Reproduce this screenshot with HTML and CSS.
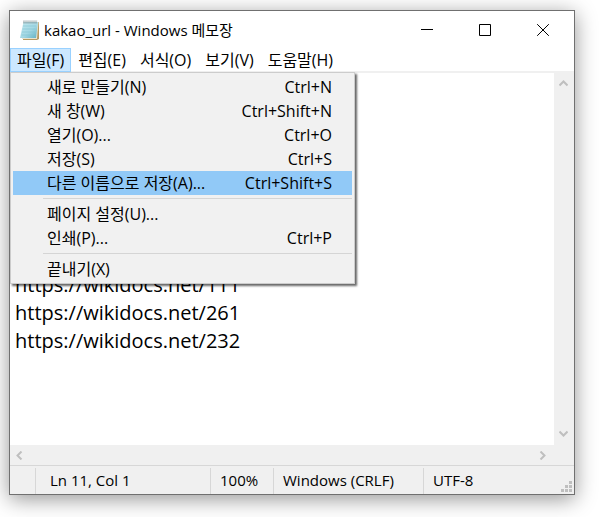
FILE: index.html
```html
<!DOCTYPE html>
<html lang="ko">
<head>
<meta charset="utf-8">
<meta name="viewport" content="width=device-width, initial-scale=1">
<title>kakao_url - Windows 메모장</title>
<link rel="stylesheet" href="styles.css">
</head>
<body>
<main class="window">
  <header class="titlebar">
    <svg class="app-icon" width="20" height="20" viewBox="0 0 20 20" aria-hidden="true">
      <defs>
        <linearGradient id="page" x1="0" y1="0" x2="1" y2="1">
          <stop offset="0" stop-color="#c3e9ef"/>
          <stop offset=".55" stop-color="#a4d8e4"/>
          <stop offset="1" stop-color="#5fafc2"/>
        </linearGradient>
      </defs>
      <path d="M4 2h15v17l-2 1H3z" fill="#b79a62"/>
      <path d="M4 2h14.500L17 19H2z" fill="#e7e3cf"/>
      <path d="M3.500 2H18l-2 16H0z" fill="url(#page)"/>
      <path d="M3 6h13M2.500 9h13M2 12h13M1.500 15h13" stroke="#82c3d1" stroke-width=".6"/>
      <path d="M4 .5v3M6 .5v3M8 .5v3M10 .5v3M12 .5v3M14 .5v3M16 .5v3" stroke="#7d8d90" stroke-width="1"/>
      <path d="M3.500 1h14" stroke="#dce3e4" stroke-width=".8"/>
    </svg>
    <h1 class="title">kakao_url - Windows 메모장</h1>
    <div class="controls">
      <button class="control" type="button" aria-label="최소화"><svg width="12" height="12" viewBox="0 0 12 12"><path d="M0 5.500h12"/></svg></button>
      <button class="control" type="button" aria-label="최대화"><svg width="12" height="12" viewBox="0 0 12 12"><path d="M.5 .5h11v11H.5z"/></svg></button>
      <button class="control" type="button" aria-label="닫기"><svg width="12" height="12" viewBox="0 0 12 12"><path d="M.2 .2l11.600 11.600M11.800 .2L.2 11.800"/></svg></button>
    </div>
  </header>

  <nav class="menubar">
    <div class="menu-host">
      <button class="menu-title open" type="button" aria-expanded="true">파일(F)</button>
      <div class="menu" role="menu">
        <button class="item" type="button" role="menuitem"><span>새로 만들기(N)</span><span>Ctrl+N</span></button>
        <button class="item" type="button" role="menuitem"><span>새 창(W)</span><span>Ctrl+Shift+N</span></button>
        <button class="item" type="button" role="menuitem"><span>열기(O)...</span><span>Ctrl+O</span></button>
        <button class="item" type="button" role="menuitem"><span>저장(S)</span><span>Ctrl+S</span></button>
        <button class="item selected" type="button" role="menuitem"><span>다른 이름으로 저장(A)...</span><span>Ctrl+Shift+S</span></button>
        <hr class="separator">
        <button class="item" type="button" role="menuitem"><span>페이지 설정(U)...</span></button>
        <button class="item" type="button" role="menuitem"><span>인쇄(P)...</span><span>Ctrl+P</span></button>
        <hr class="separator">
        <button class="item" type="button" role="menuitem"><span>끝내기(X)</span></button>
      </div>
    </div>
    <button class="menu-title" type="button">편집(E)</button>
    <button class="menu-title" type="button">서식(O)</button>
    <button class="menu-title" type="button">보기(V)</button>
    <button class="menu-title" type="button">도움말(H)</button>
  </nav>

  <section class="workspace">
    <textarea class="editor" aria-label="텍스트 편집기" spellcheck="false" wrap="off">







https://wikidocs.net/111
https://wikidocs.net/261
https://wikidocs.net/232
</textarea>
    <div class="scroll vertical">
      <button class="arrow" type="button" aria-label="위로"><svg width="9" height="7" viewBox="0 0 9 7"><path d="M.5 5.500l4-4 4 4"/></svg></button>
      <button class="arrow" type="button" aria-label="아래로"><svg width="9" height="7" viewBox="0 0 9 7"><path d="M.5 1.500l4 4 4-4"/></svg></button>
    </div>
    <div class="scroll horizontal">
      <button class="arrow" type="button" aria-label="왼쪽으로"><svg width="7" height="9" viewBox="0 0 7 9"><path d="M5.500 .5l-4 4 4 4"/></svg></button>
      <button class="arrow" type="button" aria-label="오른쪽으로"><svg width="7" height="9" viewBox="0 0 7 9"><path d="M1.500 .5l4 4-4 4"/></svg></button>
    </div>
  </section>

  <footer class="statusbar">
    <span class="cell"></span>
    <span class="cell">Ln 11, Col 1</span>
    <span class="cell">100%</span>
    <span class="cell">Windows (CRLF)</span>
    <span class="cell">UTF-8</span>
    <svg class="grip" width="11" height="11" viewBox="0 0 11 11" aria-hidden="true"><path d="M8 0h3v3H8zM4 4h3v3H4zM8 4h3v3H8zM0 8h3v3H0zM4 8h3v3H4zM8 8h3v3H8z"/></svg>
  </footer>
</main>
</body>
</html>
```
FILE: styles.css
```css
* {
  box-sizing: border-box;
}

body {
  display: flex;
  min-height: 100vh;
  margin: 0;
  padding: 10px 27px 22px 9px;
  background: #fff;
  color: #000;
  font: 15px/24px "Open Sans", "Noto Sans CJK KR", sans-serif;
}

button {
  margin: 0;
  padding: 0;
  border: 0;
  background: none;
  color: inherit;
  font: inherit;
}

.window {
  display: flex;
  flex: 1;
  flex-direction: column;
  min-width: 0;
  border: 1px solid #707070;
  background: #fff;
  box-shadow: 0 4px 20px rgba(0, 0, 0, 0.42);
}

.titlebar {
  display: flex;
  align-items: center;
  height: 37px;
  padding-right: 2px;
  padding-left: 10px;
}

.app-icon {
  flex: none;
}

.title {
  flex: 1;
  margin: 0 0 0 4px;
  font-size: 15px;
  font-weight: 400;
  line-height: 22px;
  white-space: nowrap;
}

.controls {
  display: flex;
  align-self: stretch;
}

.control {
  display: flex;
  align-items: center;
  justify-content: center;
  width: 58px;
}

.control svg {
  fill: none;
  stroke: #000;
}

.menubar {
  display: flex;
  height: 25px;
  border-bottom: 2px solid #f0f0f0;
  font-size: 16px;
}

.menu-host {
  position: relative;
}

.menu-title {
  height: 24px;
  padding: 0 7px;
  white-space: nowrap;
}

.menu-title.open {
  padding: 0 6px;
  border: 1px solid #99d1ff;
  background: #cce8ff;
  line-height: 22px;
}

.menu {
  position: absolute;
  top: 24px;
  left: 0;
  z-index: 1;
  width: 345px;
  padding: 2px;
  border: 1px solid #ccc;
  background: #f1f1f1;
  box-shadow: 2px 2px 2px rgba(0, 0, 0, 0.6);
}

.item {
  display: flex;
  justify-content: space-between;
  width: 100%;
  padding: 0 20px 0 34px;
  white-space: nowrap;
}

.item.selected {
  background: #91c9f7;
}

.separator {
  height: 1px;
  margin: 3px 0 3px 30px;
  border: 0;
  background: #d5d5d5;
}

.workspace {
  display: grid;
  flex: 1;
  grid-template-rows: 1fr 20px;
  grid-template-columns: 1fr 20px;
  background: #f0f0f0;
}

.editor {
  width: 100%;
  height: 100%;
  padding: 2px 5px;
  overflow: hidden;
  border: 0;
  outline: 0;
  background: #fff;
  color: #000;
  font: 20px/28px "Open Sans", "Noto Sans CJK KR", sans-serif;
  resize: none;
}

.scroll {
  display: flex;
  justify-content: space-between;
}

.vertical {
  flex-direction: column;
  padding-bottom: 2px;
}

.horizontal {
  padding-right: 3px;
}

.arrow {
  display: flex;
  align-items: center;
  justify-content: center;
  width: 18px;
  height: 20px;
}

.arrow svg {
  fill: none;
  stroke: #bfbfbf;
  stroke-width: 2;
}

.statusbar {
  display: grid;
  grid-template-columns: 26px 175px 63px 150px 1fr 13px;
  height: 29px;
  padding-top: 2px;
  border-top: 1px solid #d7d7d7;
  background: #f0f0f0;
}

.cell {
  height: 26px;
  padding-left: 9px;
  border-right: 1px solid #d7d7d7;
  line-height: 24px;
  white-space: nowrap;
}

.cell:nth-child(2) {
  padding-left: 14px;
}

.cell:nth-child(5) {
  border-right: 0;
}

.grip {
  align-self: end;
  margin-bottom: 2px;
  fill: #bfbfbf;
}
```
